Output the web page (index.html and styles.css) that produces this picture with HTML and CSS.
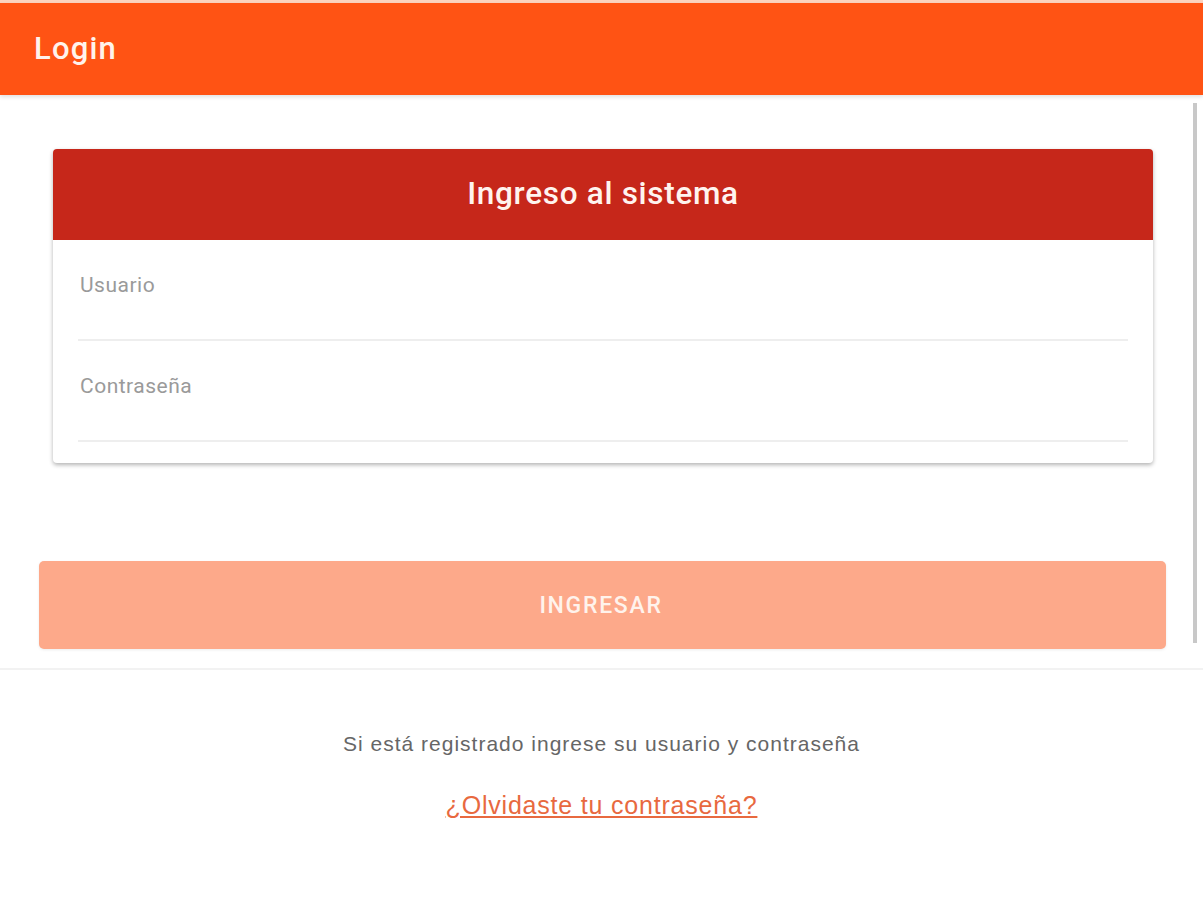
FILE: index.html
```html
<!DOCTYPE html>
<html lang="es">
<head>
    <meta charset="UTF-8">
    <meta name="viewport" content="width=device-width, initial-scale=1.0">
    <title>Login</title>
    <link rel="stylesheet" href="styles.css">
</head>
<body>
    <div class="top-strip"></div>
    <header class="toolbar">
        <span class="toolbar-title">Login</span>
    </header>
    <main class="content">
        <div class="scrollbar"></div>
        <div class="card">
            <div class="card-header">Ingreso al sistema</div>
            <div class="card-body">
                <div class="field">
                    <span class="field-label">Usuario</span>
                </div>
                <div class="field">
                    <span class="field-label">Contraseña</span>
                </div>
            </div>
        </div>
        <button class="btn" disabled>INGRESAR</button>
    </main>
    <footer class="footer">
        <p class="hint">Si está registrado ingrese su usuario y contraseña</p>
        <a href="#" class="forgot">¿Olvidaste tu contraseña?</a>
    </footer>
</body>
</html>
```

FILE: styles.css
```css
body {
    font-family: Roboto, 'Liberation Sans', sans-serif;
    margin: 0;
    padding: 0;
    background: #ffffff;
    color: #333333;
    overflow: hidden;
}

.top-strip {
    height: 3px;
    background: #fcd3bf;
}

.toolbar {
    height: 92px;
    background: #ff5314;
    display: flex;
    align-items: center;
    padding: 0 34px;
    box-shadow: 0 2px 4px rgba(0, 0, 0, 0.12);
    position: relative;
    z-index: 2;
}

.toolbar-title {
    color: #fff3ec;
    font-size: 31px;
    font-weight: 500;
    letter-spacing: 1.2px;
    margin-top: -2px;
}

.content {
    position: relative;
    height: 575px;
    padding: 54px 0 0 0;
    box-sizing: border-box;
    border-bottom: 2px solid #f2f2f2;
}

.scrollbar {
    position: absolute;
    top: 8px;
    right: 6px;
    width: 4px;
    height: 540px;
    background: #c8c8c8;
}

.card {
    margin: 0 50px 0 53px;
    background: #ffffff;
    border-radius: 4px;
    box-shadow: 0 2px 4px rgba(0, 0, 0, 0.3);
    overflow: hidden;
}

.card-header {
    height: 91px;
    background: #c6271a;
    color: #fff4ef;
    font-size: 31.5px;
    font-weight: 500;
    letter-spacing: 0.7px;
    display: flex;
    align-items: center;
    justify-content: center;
    padding-bottom: 2px;
    box-sizing: border-box;
}

.card-body {
    padding: 0 25px 21px 25px;
}

.field {
    height: 101px;
    border-bottom: 2px solid #eeeeee;
    padding: 33px 0 0 2px;
    box-sizing: border-box;
}

.field-label {
    font-size: 21px;
    letter-spacing: 0.5px;
    color: #9a9a9a;
}

.btn {
    display: block;
    width: 1127px;
    height: 88px;
    margin: 98px 0 0 39px;
    padding-left: 3px;
    border: none;
    border-radius: 5px;
    background: #fda98a;
    color: #fff3ec;
    font-family: Roboto, 'Liberation Sans', sans-serif;
    font-size: 23px;
    font-weight: 500;
    letter-spacing: 1.7px;
    box-shadow: 0 1px 3px rgba(0, 0, 0, 0.08);
}

.footer {
    text-align: center;
    padding-top: 62px;
}

.hint {
    margin: 0;
    font-family: 'Liberation Sans', Arial, sans-serif;
    font-size: 21px;
    letter-spacing: 1px;
    color: #666666;
}

.forgot {
    display: inline-block;
    margin-top: 35px;
    font-family: 'Liberation Sans', Arial, sans-serif;
    font-size: 25px;
    letter-spacing: 0.8px;
    color: #e8693f;
    text-decoration: underline;
}
```
